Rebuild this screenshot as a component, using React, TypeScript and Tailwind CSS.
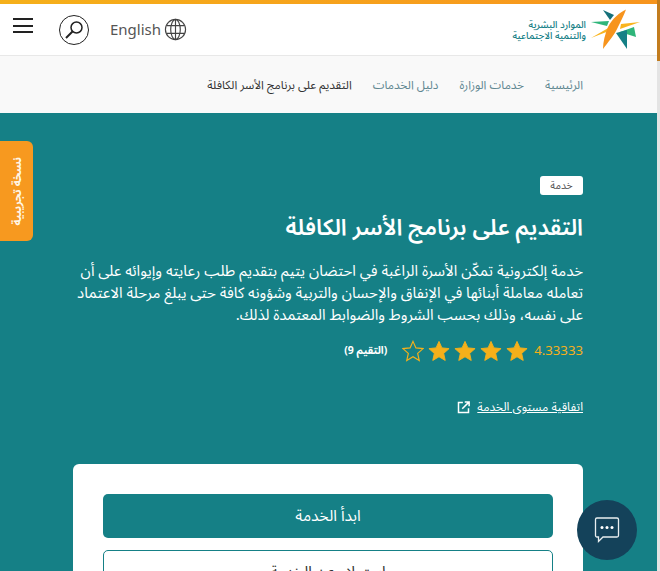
import React from "react";

const font = "font-['Noto_Sans','Noto_Sans_Arabic','DejaVu_Sans',sans-serif]";

function Logo() {
  return (
    <svg width="52" height="42" viewBox="0 0 52 42">
      <polygon points="13,1 24,6 20,11" fill="#15707a" />
      <polygon points="1,13 19,12 17,17" fill="#2fb57a" />
      <polygon points="31,15 50,13 30,20" fill="#f9b41e" />
      <polygon points="1,29 20,18 19,22" fill="#f9b41e" />
      <polygon points="30,23 44,18 46,28" fill="#2fb57a" />
      <polygon points="26,24 37,21 37,40" fill="#158086" />
      <path d="M36 0.500C30 3 22 10 18 18C15 25 13 33 13 40C18 33 24 27 28 18C31 12 34 6 36 0.500Z" fill="#f7941d" />
    </svg>
  );
}

function Star({ filled }: { filled: boolean }) {
  return (
    <svg width="22" height="22" viewBox="0 0 24 24" fill={filled ? "#f5b01a" : "none"} stroke="#f5b01a" strokeWidth={filled ? 1 : 1.3}>
      <polygon points="12,1.500 15.200,8.600 23,9.400 17.100,14.600 18.800,22.300 12,18.300 5.200,22.300 6.900,14.600 1,9.400 8.800,8.600" />
    </svg>
  );
}

export default function App() {
  return (
    <div className={`relative h-[571px] w-[660px] overflow-hidden bg-[#158086] ${font}`}>
      <header className="flex h-[56px] items-center justify-between border-b border-b-[#e8e8e8] bg-white pl-[13px] pr-[18px] pt-[4px]">
        <div className="flex items-center">
          <div className="mb-[8px] flex w-[20px] flex-col gap-[4.500px]">
            <span className="h-[2px] bg-[#222]" />
            <span className="h-[2px] bg-[#222]" />
            <span className="h-[2px] bg-[#222]" />
          </div>
          <div className="ml-[26px] flex h-[30px] w-[30px] items-center justify-center rounded-full border border-[#222]">
            <svg width="22" height="22" viewBox="0 0 22 22" fill="none" stroke="#222">
              <circle cx="13.500" cy="8.500" r="5.500" strokeWidth="1.500" />
              <path d="M9.500 12.500 L3 19" strokeWidth="2" />
            </svg>
          </div>
          <span className="ml-[21px] text-[15px] leading-none text-[#555]">English</span>
          <svg className="ml-[3px]" width="23" height="23" viewBox="0 0 24 24" fill="none" stroke="#444" strokeWidth="1.200">
            <circle cx="12" cy="12" r="10.500" />
            <ellipse cx="12" cy="12" rx="5" ry="10.500" />
            <path d="M12 1.500v21M2.500 8h19M2.500 16h19" />
          </svg>
        </div>
        <div className="flex items-center gap-[4px]" dir="rtl">
          <Logo />
          <div className="text-right text-[9.700px] font-medium leading-[11px] text-[#158086]">
            <div>الموارد البشرية</div>
            <div>والتنمية الاجتماعية</div>
          </div>
        </div>
      </header>

      <nav dir="rtl" className="flex h-[57px] items-center gap-[21px] bg-[#f9f9f9] pr-[77px] text-[11.800px]">
        <span className="text-[#5f8791]">الرئيسية</span>
        <span className="text-[#5f8791]">خدمات الوزارة</span>
        <span className="text-[#5f8791]">دليل الخدمات</span>
        <span className="text-[#333]">التقديم على برنامج الأسر الكافلة</span>
      </nav>

      <main dir="rtl" className="px-[77px] pt-[63px]">
        <span className="flex h-[19px] w-[43px] items-center justify-center rounded-[3px] bg-white text-[10.500px] text-[#555]">خدمة</span>
        <h1 className="mt-[14px] text-[22.700px] font-semibold leading-[36px] text-white">التقديم على برنامج الأسر الكافلة</h1>
        <p className="mt-[14px] w-[506px] text-[15px] leading-[22px] text-white">
          خدمة إلكترونية تمكّن الأسرة الراغبة في احتضان يتيم بتقديم طلب رعايته وإيوائه على أن تعامله معاملة أبنائها في الإنفاق والإحسان والتربية وشؤونه كافة حتى يبلغ مرحلة الاعتماد على نفسه، وذلك بحسب الشروط والضوابط المعتمدة لذلك.
        </p>
        <div className="mt-[15px] flex h-[22px] items-center">
          <span className="text-[13.200px] text-[#f5b01a]" dir="ltr">4.33333</span>
          <div className="mr-[6px] flex gap-[4px]">
            <Star filled /><Star filled /><Star filled /><Star filled /><Star filled={false} />
          </div>
          <span className="mr-[15px] text-[10.500px] font-bold text-white">(التقيم 9)</span>
        </div>
        <div className="mt-[37px] flex h-[16px] items-center gap-[6px]">
          <span className="text-[12px] leading-[16px] text-white underline">اتفاقية مستوى الخدمة</span>
          <svg width="15" height="15" viewBox="0 0 24 24" fill="none" stroke="white" strokeWidth="2.400">
            <path d="M11 4H4v16h16v-7M14 3h7v7M21 3 10 14" />
          </svg>
        </div>
        <section className="mt-[49px] h-[200px] w-[510px] rounded-[6px] bg-white px-[30px] pt-[30px]">
          <div className="flex h-[44px] items-center justify-center rounded-[5px] bg-[#158086] text-[15.500px] text-white">ابدأ الخدمة</div>
          <div className="mt-[12px] flex h-[44px] items-center justify-center rounded-[5px] border border-[#158086] text-[15.500px] text-[#333]">استعلام عن الخدمة</div>
        </section>
      </main>

      <aside className="absolute left-0 top-[141px] flex h-[100px] w-[33px] items-center justify-center rounded-r-[6px] bg-[#f7991f]">
        <span dir="rtl" className="whitespace-nowrap text-[11.500px] font-bold text-[#fff6e5] [writing-mode:vertical-rl] rotate-180">نسخة تجريبية</span>
      </aside>

      <button className="absolute left-[577px] top-[500px] flex h-[60px] w-[60px] items-center justify-center rounded-full bg-[#14425a]">
        <svg width="26" height="28" viewBox="0 0 26 28" fill="none">
          <path d="M3 2h20a1.500 1.500 0 0 1 1.500 1.500v16a1.500 1.500 0 0 1-1.500 1.500H9l-4.500 4.500V21H3a1.500 1.500 0 0 1-1.500-1.500v-16A1.500 1.500 0 0 1 3 2z" stroke="#e8eef0" strokeWidth="1.300" />
          <circle cx="8" cy="11.500" r="1.500" fill="white" /><circle cx="13" cy="11.500" r="1.500" fill="white" /><circle cx="18" cy="11.500" r="1.500" fill="white" />
        </svg>
      </button>

      <div className="absolute left-0 top-0 h-[4px] w-[657px] bg-gradient-to-r from-[#f5b01a] to-[#f7941d]" />
      <div className="absolute right-0 top-0 h-full w-[3px] bg-[#e4e4e4]">
        <div className="h-[61px] w-full bg-[#c27c1e]" />
      </div>
    </div>
  );
}
